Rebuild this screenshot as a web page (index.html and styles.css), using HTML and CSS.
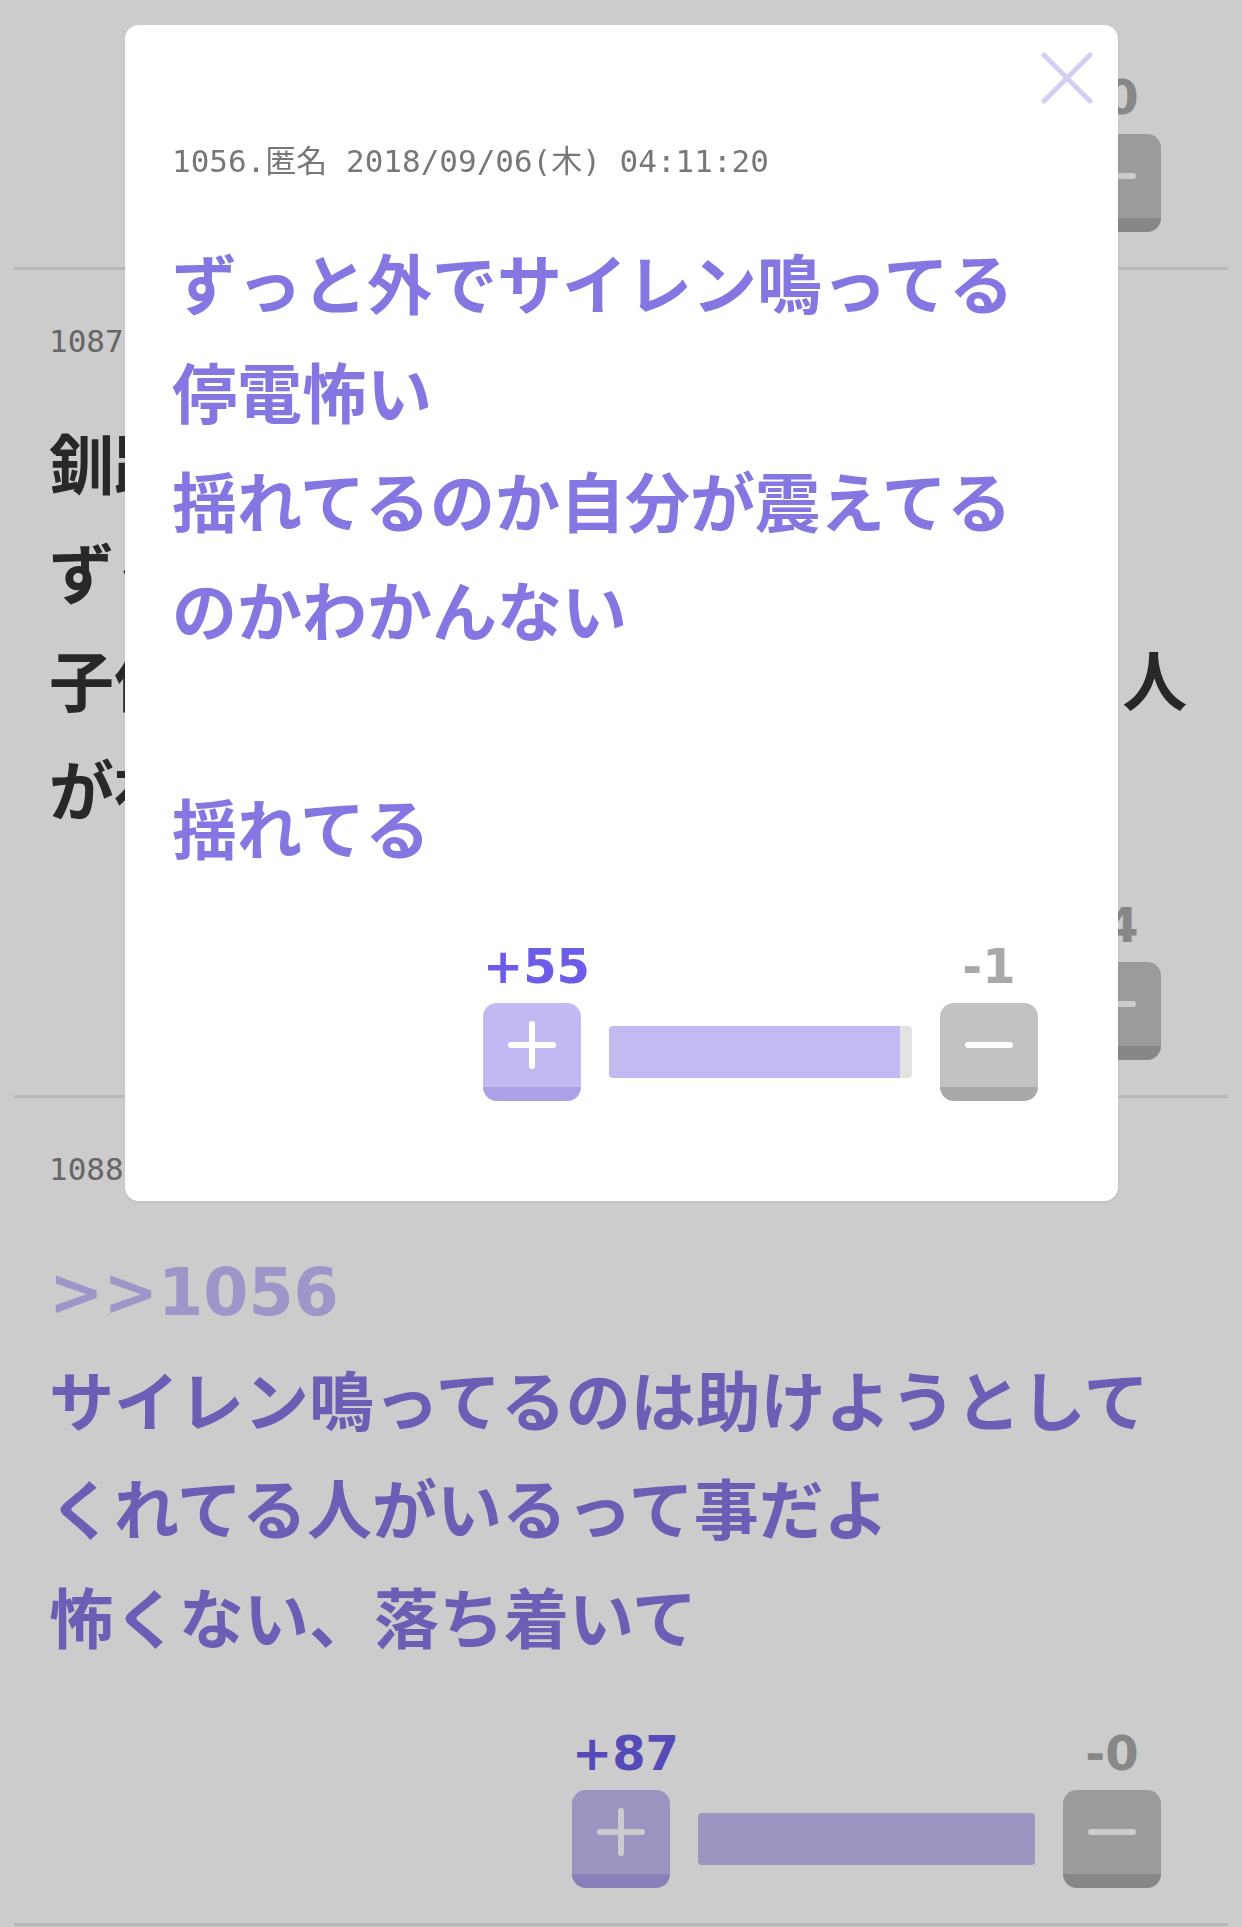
FILE: index.html
```html
<!DOCTYPE html>
<html lang="ja">
<head>
<meta charset="utf-8">
<title>スレッド</title>
<link rel="stylesheet" href="styles.css">
</head>
<body>
<main class="page">
  <article class="post">
    <div class="meta">1086.匿名 2018/09/06(木) 04:10:58</div>
    <div class="body">地震すごかった<br>みんな大丈夫？</div>
    <div class="vote vote-page">
      <div class="vote-counts"><span class="count count-plus">+41</span><span class="count count-minus">-0</span></div>
      <div class="vote-buttons">
        <button class="btn btn-plus" type="button"><svg viewBox="0 0 48 48" class="sign"><path d="M24 3v42M3 24h42"/></svg></button>
        <div class="bar"><div class="bar-fill" style="width:100%"></div></div>
        <button class="btn btn-minus" type="button"><svg viewBox="0 0 48 48" class="sign"><path d="M3 24h42"/></svg></button>
      </div>
    </div>
  </article>

  <article class="post">
    <div class="meta">1087.匿名 2018/09/06(木) 04:12:05</div>
    <div class="body">釧路だけど停電して真っ暗<br>ずっと揺れてる気がする<br>子供2人がずっと泣いてて、隣の家の人<br>が初めて来てくれた</div>
    <div class="vote vote-page">
      <div class="vote-counts"><span class="count count-plus">+63</span><span class="count count-minus">-4</span></div>
      <div class="vote-buttons">
        <button class="btn btn-plus" type="button"><svg viewBox="0 0 48 48" class="sign"><path d="M24 3v42M3 24h42"/></svg></button>
        <div class="bar"><div class="bar-fill" style="width:94%"></div></div>
        <button class="btn btn-minus" type="button"><svg viewBox="0 0 48 48" class="sign"><path d="M3 24h42"/></svg></button>
      </div>
    </div>
  </article>

  <article class="post">
    <div class="meta">1088.匿名 2018/09/06(木) 04:12:31</div>
    <div class="body body-purple"><a class="anchor" href="#">&gt;&gt;1056</a>サイレン鳴ってるのは助けようとして<br>くれてる人がいるって事だよ<br>怖くない、落ち着いて</div>
    <div class="vote vote-page">
      <div class="vote-counts"><span class="count count-plus">+87</span><span class="count count-minus">-0</span></div>
      <div class="vote-buttons">
        <button class="btn btn-plus" type="button"><svg viewBox="0 0 48 48" class="sign"><path d="M24 3v42M3 24h42"/></svg></button>
        <div class="bar"><div class="bar-fill" style="width:100%"></div></div>
        <button class="btn btn-minus" type="button"><svg viewBox="0 0 48 48" class="sign"><path d="M3 24h42"/></svg></button>
      </div>
    </div>
  </article>
</main>

<div class="overlay"></div>

<section class="modal">
  <button class="close" type="button" aria-label="閉じる">
    <svg viewBox="0 0 52 52"><path d="M3 3L49 49M49 3L3 49"/></svg>
  </button>
  <div class="meta meta-modal">1056.匿名 2018/09/06(木) 04:11:20</div>
  <div class="body body-purple body-modal">ずっと外でサイレン鳴ってる<br>停電怖い<br>揺れてるのか自分が震えてるのかわかんない<br><br>揺れてる</div>
  <div class="vote vote-modal">
    <div class="vote-counts"><span class="count count-plus">+55</span><span class="count count-minus">-1</span></div>
    <div class="vote-buttons">
      <button class="btn btn-plus" type="button"><svg viewBox="0 0 48 48" class="sign"><path d="M24 3v42M3 24h42"/></svg></button>
      <div class="bar"><div class="bar-fill" style="width:96%"></div></div>
      <button class="btn btn-minus" type="button"><svg viewBox="0 0 48 48" class="sign"><path d="M3 24h42"/></svg></button>
    </div>
  </div>
</section>
</body>
</html>
```

FILE: styles.css
```css
html, body {
  margin: 0;
  padding: 0;
  background: #ffffff;
}

body {
  overflow: hidden;
  height: 1927px;
}

.page {
  margin-top: -341px;
  padding: 0 14px;
}

.post {
  padding: 53px 20px 35px 35px;
  border-bottom: 3px solid #e6e6e6;
}

.meta {
  font-family: "DejaVu Sans Mono", "Noto Sans CJK JP", monospace;
  font-size: 31px;
  line-height: 36px;
  height: 36px;
  color: #808080;
  white-space: nowrap;
}

.body {
  margin-top: 48px;
  font-family: "Noto Sans CJK JP", sans-serif;
  font-weight: 700;
  font-size: 65px;
  line-height: 108.5px;
  color: #333333;
  white-space: nowrap;
}

.body-purple {
  color: #8577e2;
}

.anchor {
  display: block;
  padding-top: 8px;
  line-height: 100.5px;
  font-family: "DejaVu Sans", "Noto Sans CJK JP", sans-serif;
  font-weight: 700;
  color: #c3bdfa;
  text-decoration: none;
}

.vote {
  margin-top: 59px;
  margin-left: auto;
}

.vote-page {
  width: 589px;
  margin-right: 47px;
}

.vote-counts {
  display: flex;
  justify-content: space-between;
}

.count {
  width: 98px;
  text-align: center;
  font-family: "DejaVu Sans", sans-serif;
  font-weight: 700;
  font-size: 48px;
  line-height: 50px;
  white-space: nowrap;
}

.count-plus {
  color: #6c5ce7;
}

.count-minus {
  color: #a9a9a9;
}

.vote-buttons {
  display: flex;
  align-items: center;
  gap: 28px;
  margin-top: 12px;
}

.btn {
  flex: none;
  width: 98px;
  height: 98px;
  box-sizing: border-box;
  padding: 0;
  border: none;
  border-radius: 14px;
  border-bottom: 14px solid;
  display: flex;
  align-items: center;
  justify-content: center;
}

.btn-plus {
  background: #c1baf2;
  border-bottom-color: #aaa1e7;
}

.btn-minus {
  background: #c2c2c2;
  border-bottom-color: #a9a9a9;
}

.sign {
  width: 48px;
  height: 48px;
  fill: none;
  stroke: #ffffff;
  stroke-width: 6;
  stroke-linecap: round;
}

.bar {
  flex: 1;
  height: 52px;
  background: #e3e3e3;
  border-radius: 4px;
  overflow: hidden;
}

.bar-fill {
  height: 100%;
  background: #c2bbf1;
}

.overlay {
  position: fixed;
  top: 0;
  left: 0;
  right: 0;
  bottom: 0;
  background: rgba(0, 0, 0, 0.2);
}

.modal {
  position: fixed;
  top: 25px;
  left: 125px;
  width: 993px;
  box-sizing: border-box;
  padding: 118px 47px 100px;
  background: #ffffff;
  border-radius: 14px;
  box-shadow: 0 2px 4px rgba(0, 0, 0, 0.06);
}

.meta-modal {
  color: #777777;
}

.body-modal {
  margin-top: 47.5px;
  line-height: 109px;
  white-space: normal;
}

.vote-modal {
  width: 555px;
  margin-top: 60.5px;
  margin-right: 33px;
}

.close {
  position: absolute;
  top: 27px;
  right: 25px;
  width: 52px;
  height: 52px;
  padding: 0;
  border: none;
  background: none;
}

.close svg {
  display: block;
  width: 52px;
  height: 52px;
  fill: none;
  stroke: #d3cff4;
  stroke-width: 5;
  stroke-linecap: round;
}
```
